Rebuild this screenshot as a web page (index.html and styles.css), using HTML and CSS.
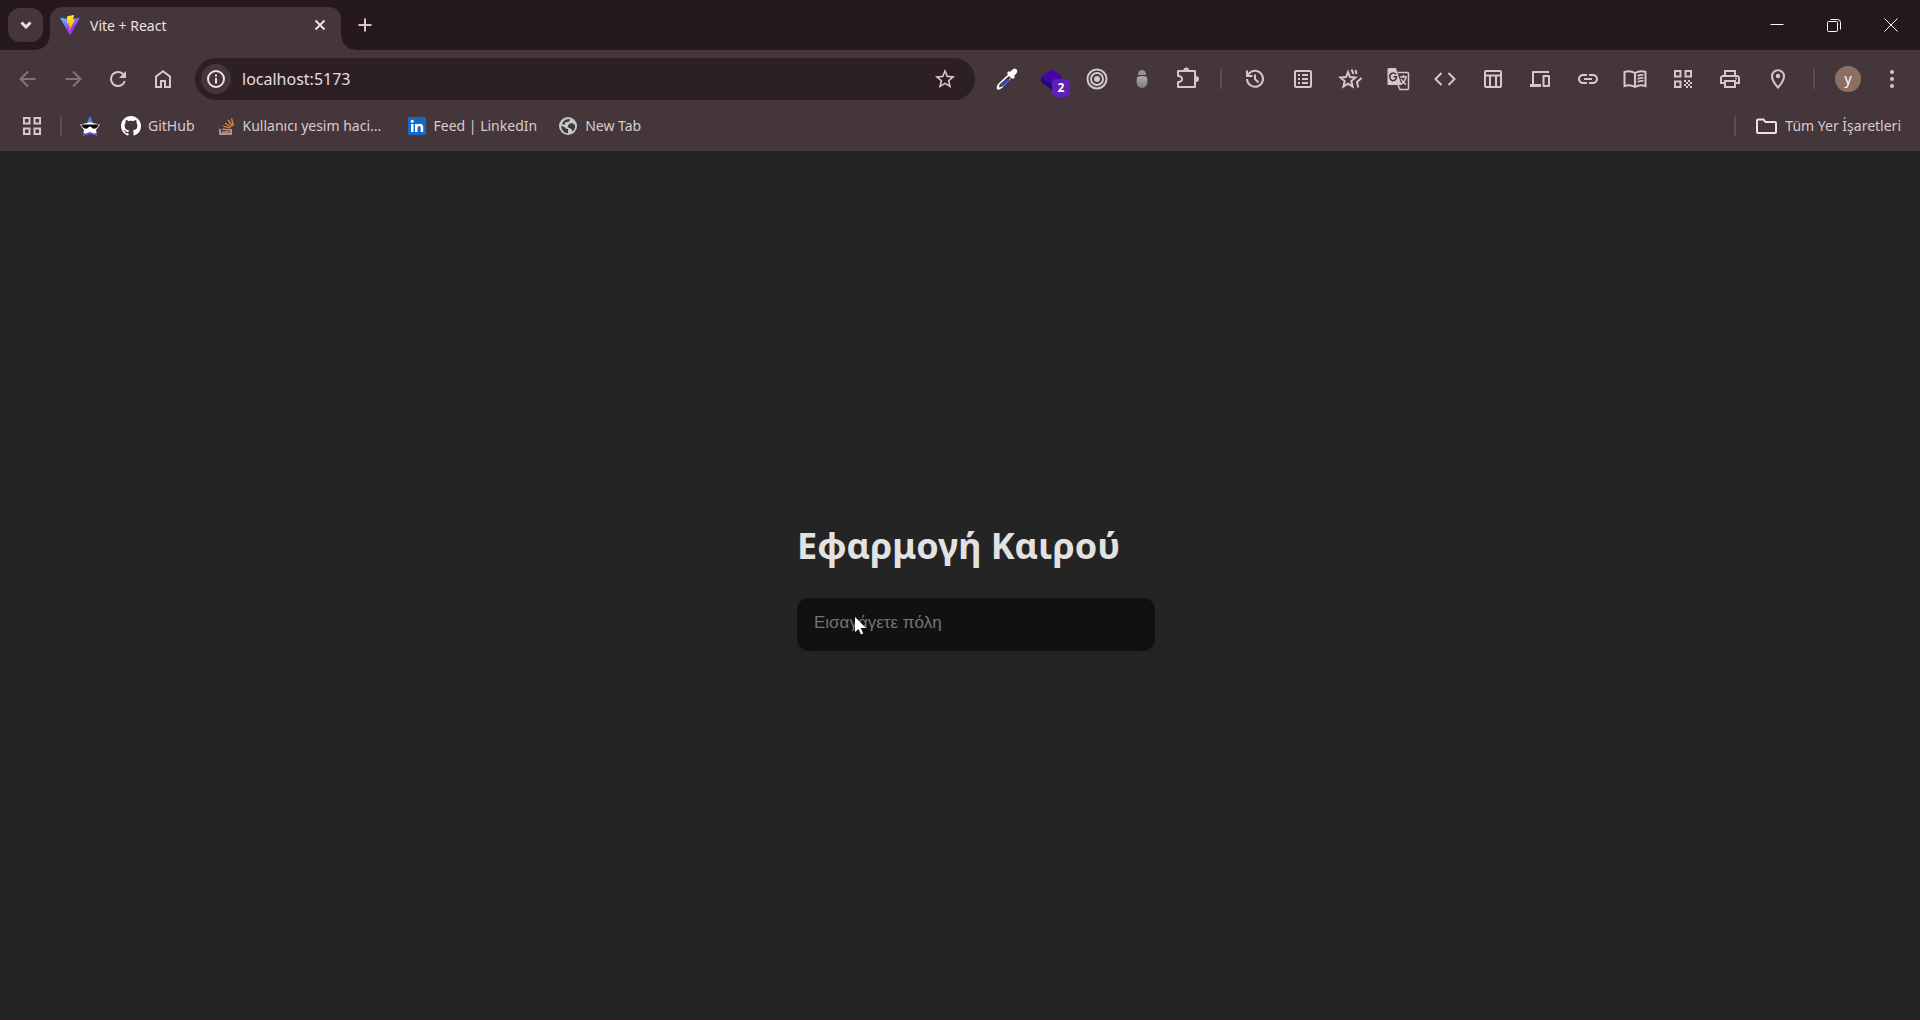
FILE: index.html
```html
<!DOCTYPE html>
<html lang="el">
<head>
<meta charset="utf-8">
<meta name="viewport" content="width=device-width, initial-scale=1">
<title>Vite + React</title>
<link rel="stylesheet" href="styles.css">
</head>
<body>
<header class="browser">
  <div class="tabstrip">
    <button class="tab-search" type="button" aria-label="Tab search"><svg class="icon" viewBox="0 0 24 24"><path class="line bold" d="M7.500 9.500l4.500 4.500 4.500-4.500"/></svg></button>
    <div class="tab">
      <svg class="favicon" viewBox="0 0 32 32">
        <defs>
          <linearGradient id="vite-body" x1="0" y1="0" x2=".6" y2="1"><stop offset="0" stop-color="#41d1ff"/><stop offset=".7" stop-color="#9b35f5"/><stop offset="1" stop-color="#bd34fe"/></linearGradient>
          <linearGradient id="vite-bolt" x1="0" y1="0" x2="0" y2="1"><stop offset="0" stop-color="#ffea30"/><stop offset="1" stop-color="#ffa800"/></linearGradient>
        </defs>
        <path fill="url(#vite-body)" d="M31 6L17 31q-1 1.500-2 0L1 6q-1-2 1-1.600L16 7l14-2.600Q32 4 31 6z"/>
        <path fill="url(#vite-bolt)" d="M22 0L12 2q-.6.2-.6.800L10.800 13q0 .8.800.6l2.800-.6-.8 4.200q-.1.700.6.500l1.800-.5-1.300 6.400q0 1 .8.200L24 7.600q.4-.8-.5-.7l-3 .6L22.500 1q.2-.9-.5-1z"/>
      </svg>
      <span class="tab-title">Vite + React</span>
      <button class="bare" type="button" aria-label="Close tab"><svg class="icon light" viewBox="0 0 24 24"><path class="line" d="M7.500 7.500l9 9m0-9l-9 9"/></svg></button>
    </div>
    <button class="bare new-tab" type="button" aria-label="New tab"><svg class="icon" viewBox="0 0 24 24"><path class="line" d="M12 5.500v13M5.500 12h13"/></svg></button>
    <div class="window-controls">
      <button class="bare" type="button" aria-label="Minimize"><svg class="icon white" viewBox="0 0 24 24"><path class="hair" d="M5.500 11.500h13"/></svg></button>
      <button class="bare" type="button" aria-label="Restore"><svg class="icon white" viewBox="0 0 24 24"><rect class="hair" x="5.500" y="8.500" width="10" height="10" rx="1"/><path class="hair" d="M8.500 6.500h7q3 0 3 3v7"/></svg></button>
      <button class="bare" type="button" aria-label="Close"><svg class="icon white" viewBox="0 0 24 24"><path class="hair" d="M5.500 5.500l13 13m0-13l-13 13"/></svg></button>
    </div>
  </div>

  <div class="toolbar">
    <nav class="group">
      <button class="bare" type="button" aria-label="Back" disabled><svg class="icon" viewBox="0 0 24 24"><path class="line" d="M19.500 12h-15M12 4.500L4.500 12l7.500 7.500"/></svg></button>
      <button class="bare" type="button" aria-label="Forward" disabled><svg class="icon" viewBox="0 0 24 24"><path class="line" d="M4.500 12h15M12 4.500l7.500 7.500-7.500 7.500"/></svg></button>
      <button class="bare" type="button" aria-label="Reload"><svg class="icon" viewBox="0 0 24 24"><path d="M17.650 6.350A7.960 7.960 0 0 0 12 4a8 8 0 1 0 7.730 10h-2.080A6 6 0 1 1 12 6c1.660 0 3.140.690 4.220 1.780L13 11h7V4z"/></svg></button>
      <button class="bare" type="button" aria-label="Home"><svg class="icon" viewBox="0 0 24 24"><path d="M6 19h3v-6h6v6h3v-9l-6-4.500L6 10zm-2 2V9l8-6 8 6v12h-7v-6h-2v6z"/></svg></button>
    </nav>

    <div class="omnibox">
      <button class="site-info" type="button" aria-label="Site information"><svg class="icon small light" viewBox="0 0 20 20"><circle class="line" cx="10" cy="10" r="8"/><path class="line" d="M10 9v5.500M10 5.500v2"/></svg></button>
      <input class="address" type="text" aria-label="Address" value="localhost:5173">
      <button class="bare" type="button" aria-label="Bookmark this tab"><svg class="icon" viewBox="0 0 24 24"><path d="M22 9.240l-7.190-.62L12 2 9.190 8.630 2 9.240l5.460 4.730L5.820 21 12 17.270 18.180 21l-1.630-7.030L22 9.240zM12 15.400l-3.760 2.270 1-4.280-3.320-2.880 4.380-.38L12 6.100l1.710 4.040 4.380.38-3.320 2.880 1 4.280L12 15.400z"/></svg></button>
    </div>

    <div class="group">
      <button class="bare" type="button" aria-label="Color picker"><svg class="icon" viewBox="0 0 24 24"><path fill="#fff" d="M17 3q3-3 5 0 1 2-1.500 4.500l-1.500 1.500 1 1-2 2-1.500-1L7 21q-4 3-5 1-1-1 1-5L13 7.500l-1-1.500 2-2 1 1z"/><path fill="#45363b" d="M14 9l2 2-10 9-2 .5.500-3z"/><path fill="#2747c7" d="M10.500 13h4L8 19.500H6.500l-.5-2z"/></svg></button>
      <button class="bare badge-host" type="button" aria-label="Layers, 2"><svg class="icon" viewBox="0 0 24 24"><path fill="#1c0c7a" d="M1 10v5l11 8 9-7v-5z"/><path fill="#4505a8" d="M12 2l11 8-11 8-11-8z"/></svg><span class="badge">2</span></button>
      <button class="bare" type="button" aria-label="Rings"><svg class="icon ring" viewBox="0 0 24 24"><circle class="line" cx="12" cy="12" r="9.500"/><circle class="line" cx="12" cy="12" r="6"/><circle cx="12" cy="12" r="3"/></svg></button>
      <button class="bare" type="button" aria-label="Inspector"><svg class="icon" viewBox="0 0 24 24"><defs><linearGradient id="bug" x1="0" y1="0" x2="0" y2="1"><stop offset="0" stop-color="#b0abad"/><stop offset="1" stop-color="#7d7b7c"/></linearGradient></defs><path fill="#969394" d="M8 8q0-5 4-5t4 5z"/><path fill="url(#bug)" d="M7 10q5-2 10 0 1 6-.5 8.500-2 2.500-4.500 2.500t-4.500-2.500Q6 16 7 10z"/></svg></button>
      <button class="bare" type="button" aria-label="Extensions"><svg class="icon" viewBox="0 0 24 24"><path fill="none" stroke="currentColor" stroke-width="2" stroke-linejoin="round" d="M3 4h17v16H3v-5q4 0 4-3T3 9z"/><path d="M8.500 3.500q0-3 2.800-3t2.800 3zM20.500 9q3.500 0 3.500 3t-3.500 3z"/></svg></button>
    </div>

    <span class="divider"></span>

    <div class="group shortcuts">
      <button class="bare" type="button" aria-label="History"><svg class="icon" viewBox="0 0 24 24"><path class="line" d="M4 12a8 8 0 1 0 2-5.500L4 9M4 3.500V9h5.500M12 7.500V12l3.500 3.500"/></svg></button>
      <button class="bare" type="button" aria-label="Reading list"><svg class="icon" viewBox="0 0 24 24"><rect class="line" x="4" y="4" width="16" height="16" rx="1"/><path class="line" d="M7 8h2m2 0h6M7 12h2m2 0h6M7 16h2m2 0h6"/></svg></button>
      <button class="bare" type="button" aria-label="Bookmarks"><svg class="icon" viewBox="0 0 24 24"><path class="line" d="M10 5l2 5 5.500.5-4.200 3.600 1.300 5.400-4.600-2.900-4.600 2.900 1.300-5.400L2.500 10.500 8 10zM13.500 2.500L15.500 7M23.500 11l-4.500 4 1.300 5.500M17.500 3l1 4"/></svg></button>
      <button class="bare" type="button" aria-label="Translate"><svg class="icon" viewBox="0 0 24 24"><path d="M3 1h7l5.500 17H3q-1.500 0-1.500-1.500v-14Q1.500 1 3 1z"/><path fill="none" stroke="#45363b" stroke-width="1.500" d="M10 7.500Q8 5 5.500 6.500T4 11q1.500 4 5 2 1.500-1 1.500-3.200H7.500"/><path class="line thin" d="M12 5.500h9.500q1 0 1 1v15q0 1-1 1H14l-2-4.500M14 10h7m-3.500-2v2m2.500 0q-1 5-5 7m0-5q2 4 5 5.500"/></svg></button>
      <button class="bare" type="button" aria-label="Source code"><svg class="icon" viewBox="0 0 24 24"><path class="line" d="M8.500 6l-6 6 6 6M15.500 6l6 6-6 6"/></svg></button>
      <button class="bare" type="button" aria-label="Layout"><svg class="icon" viewBox="0 0 24 24"><rect class="line" x="4" y="4" width="16" height="16" rx="1"/><path class="line" d="M4 8.500h16M9 8.500V20m6-11.500V20"/></svg></button>
      <button class="bare" type="button" aria-label="Devices"><svg class="icon" viewBox="0 0 24 24"><path d="M5 4h16v2H6v11h7v3H2v-3h2V5q0-1 1-1zM15.500 8h5.500q1 0 1 1v10q0 1-1 1h-5.500q-1 0-1-1V9q0-1 1-1zm1 2v8H20v-8z"/></svg></button>
      <button class="bare" type="button" aria-label="Copy link"><svg class="icon" viewBox="0 0 24 24"><path d="M17 7h-4v2h4c1.650 0 3 1.350 3 3s-1.350 3-3 3h-4v2h4c2.760 0 5-2.240 5-5s-2.240-5-5-5zm-6 8H7c-1.650 0-3-1.350-3-3s1.350-3 3-3h4V7H7c-2.760 0-5 2.240-5 5s2.240 5 5 5h4v-2zm-3-4h8v2H8z"/></svg></button>
      <button class="bare" type="button" aria-label="Reading mode"><svg class="icon" viewBox="0 0 24 24"><path class="line" d="M12 6Q7 3 1.500 5v14q5.500-2 10.500 1 5-3 10.500-1V5Q17 3 12 6zv14"/><path class="line thin" d="M14.500 9q3-1.500 6-1m-6 4q3-1.500 6-1m-6 4q3-1.500 6-1"/></svg></button>
      <button class="bare" type="button" aria-label="QR code"><svg class="icon" viewBox="0 0 24 24"><path class="line" d="M4 4h5.500v5.500H4zM14.500 4H20v5.500h-5.500zM4 14.500h5.500V20H4z"/><path d="M13 13h2v2h-2zm4 0h2v2h-2zm-2 2h2v2h-2zm4 0h2v2h-2zm-6 2h2v2h-2zm4 0h2v2h-2zm-2 2h2v2h-2zm4 0h2v2h-2z"/></svg></button>
      <button class="bare" type="button" aria-label="Print"><svg class="icon" viewBox="0 0 24 24"><path d="M19 8h-1V3H6v5H5c-1.660 0-3 1.340-3 3v6h4v4h12v-4h4v-6c0-1.660-1.340-3-3-3zM8 5h8v3H8V5zm8 12v2H8v-4h8v2zm2-2v-2H6v2H4v-4c0-.55.45-1 1-1h14c.55 0 1 .45 1 1v4h-2z"/><circle cx="18" cy="11.500" r="1"/></svg></button>
      <button class="bare" type="button" aria-label="Location"><svg class="icon" viewBox="0 0 24 24"><path class="line" d="M12 20.500C8 16 6 12.500 6 9.200a6 6 0 0 1 12 0C18 12.500 16 16 12 20.500z"/><circle cx="12" cy="9" r="2.200"/></svg></button>
    </div>

    <span class="divider"></span>
    <button class="avatar" type="button" aria-label="Profile">y</button>
    <button class="bare" type="button" aria-label="Menu"><svg class="icon" viewBox="0 0 24 24"><circle cx="12" cy="5" r="2"/><circle cx="12" cy="12" r="2"/><circle cx="12" cy="19" r="2"/></svg></button>
  </div>

  <div class="bookmarks">
    <button class="bare apps" type="button" aria-label="Apps"><svg class="icon" viewBox="0 0 24 24"><path class="line" d="M4 4h5.500v5.500H4zM14.500 4H20v5.500h-5.500zM4 14.500h5.500V20H4zM14.500 14.500H20V20h-5.500z"/></svg></button>
    <span class="divider"></span>
    <a class="bookmark" href="#" aria-label="Star"><svg class="bookmark-icon" viewBox="0 0 20 20"><path fill="#fff" d="M10 1l2.500 6 7.500 1.500-4 5.500 1 5.500-7-2-7 2 1-5.500-4-5.500L7.500 7z"/><path fill="#4a7de8" d="M10 0l3 6.500H7z"/><path fill="#5a4fd8" d="M3 17l3 .5 4-1.500 4 1.500 3-.5v2.500L10 18l-7 2z"/><path fill="#0b0b0b" d="M1 8.500h18l-2 3q-4 3-6-.8H9q-2 3.800-6 .8z"/></svg></a>
    <a class="bookmark" href="#"><svg class="bookmark-icon" viewBox="0 0 16 16"><path fill="#fff" d="M8 0C3.580 0 0 3.580 0 8c0 3.540 2.290 6.530 5.470 7.590.4.070.55-.17.55-.38 0-.19-.01-.82-.01-1.490-2.010.37-2.530-.49-2.690-.94-.09-.23-.48-.94-.82-1.130-.28-.15-.68-.52-.01-.53.63-.01 1.080.58 1.230.82.720 1.210 1.870.87 2.330.66.070-.52.28-.87.51-1.070-1.780-.2-3.640-.89-3.640-3.950 0-.87.31-1.590.82-2.150-.08-.2-.36-1.020.08-2.120 0 0 .67-.21 2.200.82.640-.18 1.320-.27 2-.27s1.360.09 2 .27c1.530-1.040 2.200-.82 2.200-.82.440 1.100.16 1.920.08 2.120.51.56.82 1.270.82 2.150 0 3.070-1.870 3.750-3.650 3.950.29.25.54.73.54 1.480 0 1.070-.01 1.930-.01 2.200 0 .21.15.46.55.38A8.010 8.010 0 0 0 16 8c0-4.420-3.580-8-8-8z"/></svg><span class="label">GitHub</span></a>
    <a class="bookmark" href="#"><svg class="bookmark-icon" viewBox="0 0 20 20"><path fill="none" stroke="#bcbbbb" stroke-width="1.500" d="M4 13v5h11v-5"/><path fill="none" stroke="#e08a45" stroke-width="1.300" d="M6 16h7.500M6.200 13.200l7.400.8M7 10l7.200 2.200M9 7l6.300 4M12 4l4.500 6M15.500 2.500l2 7"/></svg><span class="label long">Kullanıcı yesim haci...</span></a>
    <a class="bookmark" href="#"><svg class="bookmark-icon" viewBox="0 0 20 20"><rect x="1" y="1" width="18" height="18" rx="1" fill="#1269c7"/><path fill="#fff" d="M4 8h2.500v8H4zM8 8h2.400v1.100Q11.300 7.800 13 7.800q3.200 0 3.200 3.600V16h-2.500v-4.200q0-1.900-1.500-1.900-1.700 0-1.700 2V16H8z"/><circle cx="5.200" cy="5.300" r="1.500" fill="#fff"/></svg><span class="label">Feed | LinkedIn</span></a>
    <a class="bookmark" href="#"><svg class="bookmark-icon" viewBox="0 0 20 20"><circle cx="10" cy="10" r="9" fill="#c5c8cb"/><path fill="#45363b" d="M3 10q3 0 4 1.500t3 1.500v4.200Q4 17 3 10zM8 3.500l4-.5q0 3-3 3T7 9L4 8q1-3.500 4-4.500zM11 8l3-1 3 2q.5 4-2.500 6.500-.5-2.500-2-3t-3-1.500z"/></svg><span class="label">New Tab</span></a>
    <span class="divider all-divider"></span>
    <a class="bookmark all" href="#"><svg class="icon light" viewBox="0 0 24 24"><path class="line" d="M4 5.500h5.500l2 2.500H21q1 0 1 1v9q0 1-1 1H4q-1 0-1-1V6.500q0-1 1-1z"/></svg><span class="label">Tüm Yer İşaretleri</span></a>
  </div>
</header>

<main class="page">
  <section class="weather">
    <h1 class="title">Εφαρμογή Καιρού</h1>
    <form class="search">
      <input class="city" type="text" placeholder="Εισαγάγετε πόλη" aria-label="Εισαγάγετε πόλη">
      <svg class="pointer" viewBox="0 0 12 18"><path fill="#fff" d="M0 0v15l3.500-3 2.500 5.500 2.200-1L5.800 11H11z"/></svg>
    </form>
  </section>
</main>
</body>
</html>
```
FILE: styles.css
```css
* { box-sizing: border-box; }

:root {
  --frame: #26191d;
  --toolbar: #45363b;
  --field: #2d2024;
  --icon: #d9c5ca;
  --text: #d6cdd0;
  --line: #5e4c52;
}

body {
  margin: 0;
  min-height: 100vh;
  display: flex;
  flex-direction: column;
  border-bottom: 1px solid #2f1f24;
  background: #242424;
  color: var(--text);
  font-family: "Noto Sans", "Open Sans", sans-serif;
  font-size: 14px;
}

button {
  padding: 0;
  border: 0;
  font: inherit;
  color: var(--icon);
}

.bare {
  display: flex;
  flex: none;
  align-items: center;
  justify-content: center;
  width: 32px;
  height: 32px;
  background: none;
}
.bare:disabled { color: #83747a; }

.icon { display: block; flex: none; width: 24px; height: 24px; fill: currentColor; }
.icon.small { width: 20px; height: 20px; }
.light { color: #ece2e5; }
.white { color: #fff; }
.ring { color: #d0cccd; }
.line { fill: none; stroke: currentColor; stroke-width: 2; }
.bold { stroke-width: 3; }
.thin { stroke-width: 1.500; }
.hair { fill: none; stroke: currentColor; stroke-width: 1; }

.browser { background: var(--toolbar); }

/* tab strip */
.tabstrip {
  display: flex;
  align-items: center;
  height: 50px;
  padding: 0 13px 0 8px;
  background: var(--frame);
}
.tab-search {
  display: grid;
  place-items: center;
  width: 35px;
  height: 34px;
  border-radius: 12px;
  background: var(--toolbar);
  color: #ece2e5;
}
.tab {
  position: relative;
  display: flex;
  align-items: center;
  align-self: flex-end;
  width: 291px;
  height: 43px;
  margin-left: 7px;
  padding: 0 5px 7px 10px;
  border-radius: 12px 12px 0 0;
  background: var(--toolbar);
}
.tab::before,
.tab::after {
  content: "";
  position: absolute;
  bottom: 0;
  width: 14px;
  height: 14px;
}
.tab::before { right: 100%; background: radial-gradient(circle at 0 0, transparent 13px, var(--toolbar) 14px); }
.tab::after { left: 100%; background: radial-gradient(circle at 100% 0, transparent 13px, var(--toolbar) 14px); }
.favicon { width: 20px; height: 20px; }
.tab-title { flex: 1; margin-left: 10px; color: #ece2e5; }
.new-tab { margin-left: 8px; }
.window-controls { display: flex; gap: 25px; margin-left: auto; }

/* toolbar */
.toolbar {
  display: flex;
  align-items: center;
  height: 58px;
  padding: 0 12px;
}
.group { display: flex; gap: 13px; }
.shortcuts { flex: 0 1 555px; gap: 0; justify-content: space-between; margin-right: 2px; }
.omnibox {
  display: flex;
  flex: 1;
  align-items: center;
  height: 42px;
  margin: 0 16px;
  padding: 0 14px 0 6px;
  border-radius: 21px;
  background: var(--field);
}
.site-info {
  display: grid;
  place-items: center;
  width: 30px;
  height: 30px;
  border-radius: 50%;
  background: var(--toolbar);
}
.address {
  flex: 1;
  min-width: 0;
  margin-left: 11px;
  padding: 0;
  border: 0;
  outline: 0;
  background: none;
  color: #e6dde0;
  font: 16px "Noto Sans", "Open Sans", sans-serif;
}
.divider { flex: none; width: 2px; height: 20px; margin: 0 17px; background: var(--line); }
.avatar {
  width: 26px;
  height: 26px;
  margin: 0 15px 0 3px;
  border-radius: 50%;
  background: #8d6e63;
  color: #fff;
  line-height: 22px;
}

.badge-host { position: relative; }
.badge {
  position: absolute;
  top: 16px;
  left: 16px;
  width: 18px;
  height: 18px;
  border-radius: 4px;
  background: #5b21b6;
  color: #fff;
  font-size: 12px;
  font-weight: 700;
  line-height: 18px;
}

/* bookmarks bar */
.bookmarks {
  display: flex;
  align-items: center;
  height: 43px;
  padding: 0 19px 8px 16px;
}
.bookmarks .divider { margin: 0 18px 0 12px; }
.bookmarks .all-divider { margin: 0 18px 0 auto; }
.bookmark {
  display: flex;
  align-items: center;
  gap: 7px;
  margin-right: 21px;
  color: var(--text);
  text-decoration: none;
  white-space: nowrap;
}
.bookmark.all { margin: 0; }
.bookmark-icon { width: 20px; height: 20px; }
.long { width: 143px; }

/* page */
.page {
  display: flex;
  flex: 1;
  align-items: center;
  justify-content: center;
  padding-top: 4px;
}
.weather { width: 326px; }
.title {
  margin: 0;
  color: #e2e2e2;
  font-size: 36px;
  font-weight: 700;
  line-height: 44px;
  white-space: nowrap;
}
.search { position: relative; width: 358px; margin-top: 30px; }
.city {
  display: block;
  width: 100%;
  height: 53px;
  padding: 0 17px 2px;
  border: 0;
  border-radius: 12px;
  background: #111;
  color: #e2e2e2;
  box-shadow: 0 3px 3px #2f2024;
  font: 17px "Liberation Sans", Arial, sans-serif;
}
.city::placeholder { color: #757575; }
.pointer { position: absolute; top: 19px; left: 58px; width: 12px; height: 18px; }
```
